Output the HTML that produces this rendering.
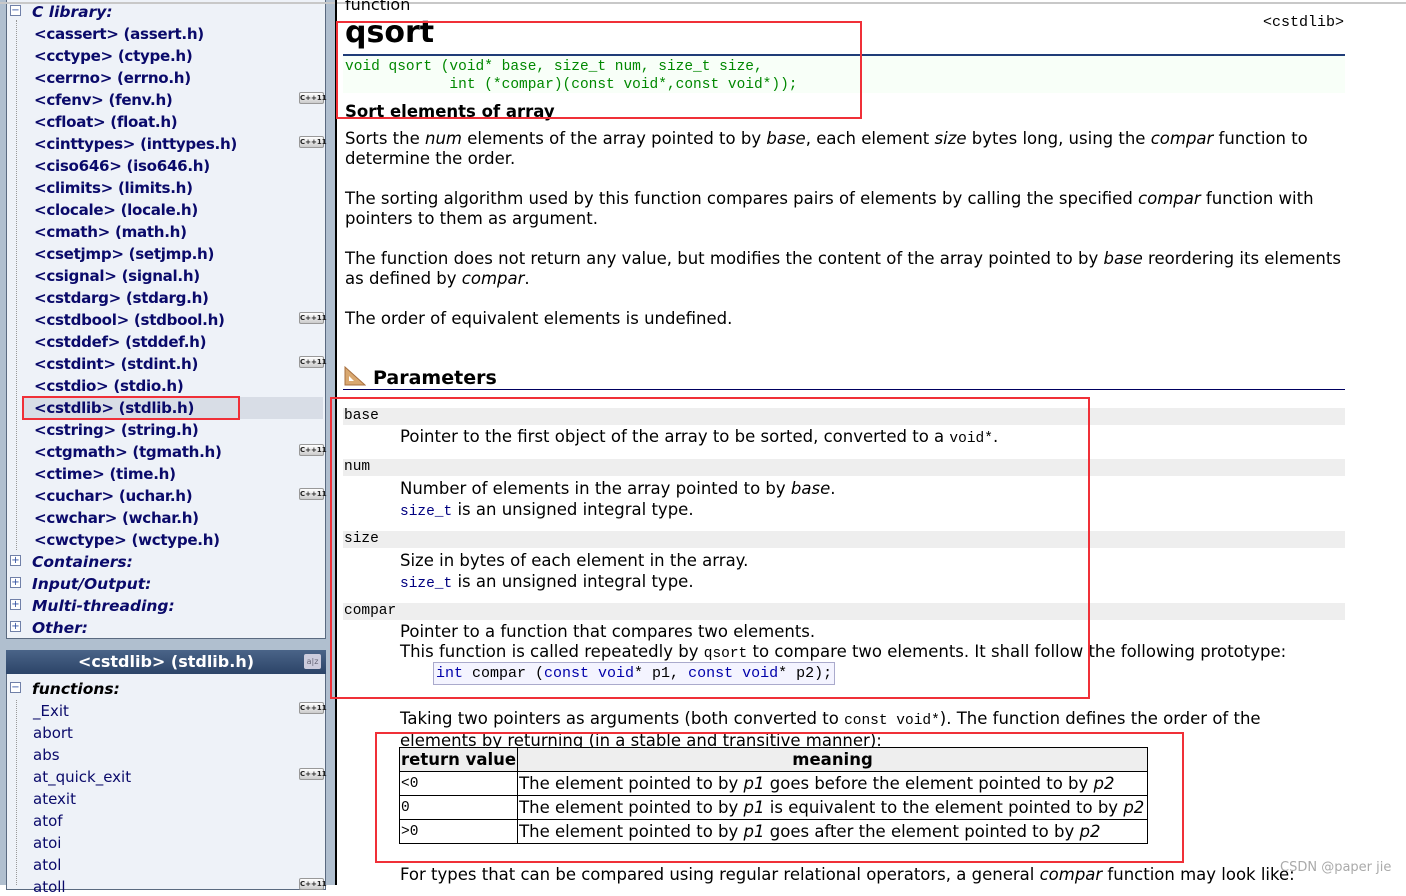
<!DOCTYPE html>
<html><head><meta charset="utf-8"><style>
*{margin:0;padding:0;box-sizing:border-box}
body{width:1406px;height:885px;overflow:hidden;background:#fff;font-family:"DejaVu Sans","Liberation Sans",sans-serif;position:relative}
.a{position:absolute;white-space:nowrap}
#side{position:absolute;left:0;top:0;width:335px;height:885px;background:#b0bfcf}
.pan{position:absolute;left:6px;width:320px;background:#eef2f8;border:1px solid #5a6a80}
.it{position:absolute;left:34px;font-size:15.1px;font-weight:bold;color:#0a0a6a;letter-spacing:-0.3px}
.fn{position:absolute;left:33px;font-size:15px;color:#0a0a6a}
.cat{position:absolute;left:32px;font-size:15.5px;font-weight:bold;font-style:italic;color:#0a0a6a}
.cpp{position:absolute;left:299px;width:25px;height:12px;border:1px solid #999;border-radius:2px;background:linear-gradient(#fff,#ccc);font-size:7px;font-weight:bold;line-height:10px;text-align:center;color:#222}
.box{position:absolute;left:10px;width:11px;height:11px;border:1px solid #7080a8;background:#fff;font-size:10px;line-height:9px;text-align:center;color:#3050a0}
.dot{position:absolute;left:16px;border-left:1px dotted #999}
.m{font-family:"Liberation Mono","DejaVu Sans Mono",monospace}
.t{font-size:16.5px;color:#000;left:345px}
.band{position:absolute;left:343px;width:1002px;height:17px;background:#eee}
.pn{font-size:14.5px;left:344px}
.d{left:400px;font-size:16.5px}
.red{position:absolute;border:2px solid #f03038}
table{border-collapse:collapse;font-size:16.5px}
td,th{border:1px solid #000;height:24px;padding:0 1px;text-align:left;font-weight:normal}
</style></head><body>
<div id="side">
<div class="pan" style="top:0;height:639px;border-top:none"></div>
<div class="dot" style="top:20px;height:530px"></div>
<div class="box" style="top:5px">−</div>
<div class="cat" style="top:3px">C library:</div>
<div style="position:absolute;left:23px;top:397px;width:300px;height:22px;background:#d8dde6"></div>
<div class="it" style="top:25px">&lt;cassert&gt; (assert.h)</div>
<div class="it" style="top:47px">&lt;cctype&gt; (ctype.h)</div>
<div class="it" style="top:69px">&lt;cerrno&gt; (errno.h)</div>
<div class="it" style="top:91px">&lt;cfenv&gt; (fenv.h)</div>
<div class="it" style="top:113px">&lt;cfloat&gt; (float.h)</div>
<div class="it" style="top:135px">&lt;cinttypes&gt; (inttypes.h)</div>
<div class="it" style="top:157px">&lt;ciso646&gt; (iso646.h)</div>
<div class="it" style="top:179px">&lt;climits&gt; (limits.h)</div>
<div class="it" style="top:201px">&lt;clocale&gt; (locale.h)</div>
<div class="it" style="top:223px">&lt;cmath&gt; (math.h)</div>
<div class="it" style="top:245px">&lt;csetjmp&gt; (setjmp.h)</div>
<div class="it" style="top:267px">&lt;csignal&gt; (signal.h)</div>
<div class="it" style="top:289px">&lt;cstdarg&gt; (stdarg.h)</div>
<div class="it" style="top:311px">&lt;cstdbool&gt; (stdbool.h)</div>
<div class="it" style="top:333px">&lt;cstddef&gt; (stddef.h)</div>
<div class="it" style="top:355px">&lt;cstdint&gt; (stdint.h)</div>
<div class="it" style="top:377px">&lt;cstdio&gt; (stdio.h)</div>
<div class="it" style="top:399px">&lt;cstdlib&gt; (stdlib.h)</div>
<div class="it" style="top:421px">&lt;cstring&gt; (string.h)</div>
<div class="it" style="top:443px">&lt;ctgmath&gt; (tgmath.h)</div>
<div class="it" style="top:465px">&lt;ctime&gt; (time.h)</div>
<div class="it" style="top:487px">&lt;cuchar&gt; (uchar.h)</div>
<div class="it" style="top:509px">&lt;cwchar&gt; (wchar.h)</div>
<div class="it" style="top:531px">&lt;cwctype&gt; (wctype.h)</div>
<div class="cpp" style="top:92px">C++11</div>
<div class="cpp" style="top:136px">C++11</div>
<div class="cpp" style="top:312px">C++11</div>
<div class="cpp" style="top:356px">C++11</div>
<div class="cpp" style="top:444px">C++11</div>
<div class="cpp" style="top:488px">C++11</div>
<div class="box" style="top:555px">+</div><div class="cat" style="top:553px">Containers:</div>
<div class="box" style="top:577px">+</div><div class="cat" style="top:575px">Input/Output:</div>
<div class="box" style="top:599px">+</div><div class="cat" style="top:597px">Multi-threading:</div>
<div class="box" style="top:621px">+</div><div class="cat" style="top:619px">Other:</div>
<div class="red" style="left:22px;top:396px;width:218px;height:24px"></div>

<div class="pan" style="top:650px;height:240px"></div>
<div style="position:absolute;left:6px;top:650px;width:320px;height:24px;background:linear-gradient(#4a6488,#2c4468);color:#fff;font-weight:bold;font-size:16px;text-align:center;line-height:24px">&lt;cstdlib&gt; (stdlib.h)</div>
<div style="position:absolute;left:304px;top:654px;width:17px;height:15px;background:#ccd;border-radius:2px;font-size:8px;color:#667;text-align:center;line-height:15px">a|z</div>
<div class="dot" style="top:700px;height:185px"></div>
<div class="box" style="top:682px">−</div>
<div class="cat" style="top:680px;color:#000">functions:</div>
<div class="fn" style="top:702px">_Exit</div>
<div class="fn" style="top:724px">abort</div>
<div class="fn" style="top:746px">abs</div>
<div class="fn" style="top:768px">at_quick_exit</div>
<div class="fn" style="top:790px">atexit</div>
<div class="fn" style="top:812px">atof</div>
<div class="fn" style="top:834px">atoi</div>
<div class="fn" style="top:856px">atol</div>
<div class="fn" style="top:878px">atoll</div>
<div class="cpp" style="top:702px">C++11</div>
<div class="cpp" style="top:768px">C++11</div>
<div class="cpp" style="top:878px">C++11</div>
</div>
<div style="position:absolute;left:0;top:2px;width:1406px;height:2px;background:#c8c8c8"></div>
<div style="position:absolute;left:335px;top:0;width:2px;height:885px;background:#000"></div>

<div class="a" style="left:345px;top:-5px;font-size:16px">function</div>
<div class="a" style="left:345px;top:15px;font-size:30px;font-weight:bold">qsort</div>
<div class="a m" style="left:1263px;top:14px;font-size:15px">&lt;cstdlib&gt;</div>
<div style="position:absolute;left:343px;top:54px;width:1002px;height:2px;background:#203c78"></div>
<div style="position:absolute;left:343px;top:56px;width:1002px;height:37px;background:#f8fff8"></div>
<div class="a m" style="left:345px;top:58px;font-size:14.5px;color:#080;line-height:18px;white-space:pre">void qsort (void* base, size_t num, size_t size,
            int (*compar)(const void*,const void*));</div>
<div class="a" style="left:345px;top:102px;font-size:16.5px;font-weight:bold">Sort elements of array</div>
<div class="red" style="left:336px;top:21px;width:526px;height:98px"></div>

<div class="a t" style="top:129px;line-height:20px">Sorts the <i>num</i> elements of the array pointed to by <i>base</i>, each element <i>size</i> bytes long, using the <i>compar</i> function to<br>determine the order.</div>
<div class="a t" style="top:189px;line-height:20px">The sorting algorithm used by this function compares pairs of elements by calling the specified <i>compar</i> function with<br>pointers to them as argument.</div>
<div class="a t" style="top:249px;line-height:20px">The function does not return any value, but modifies the content of the array pointed to by <i>base</i> reordering its elements<br>as defined by <i>compar</i>.</div>
<div class="a t" style="top:309px">The order of equivalent elements is undefined.</div>

<svg class="a" style="left:344px;top:366px" width="22" height="20"><path d="M1 19 L1 1 L21 19 Z" fill="#d9a870" stroke="#a87040"/><path d="M5 15 L5 10 L10 15 Z" fill="#fff"/></svg>
<div class="a" style="left:373px;top:367px;font-size:19px;font-weight:bold">Parameters</div>
<div style="position:absolute;left:343px;top:389px;width:1002px;height:1px;background:#000060"></div>

<div class="band" style="top:408px"></div><div class="a m pn" style="top:408px">base</div>
<div class="a d" style="top:427px">Pointer to the first object of the array to be sorted, converted to a <span class="m" style="font-size:14.5px">void*</span>.</div>
<div class="band" style="top:459px"></div><div class="a m pn" style="top:459px">num</div>
<div class="a d" style="top:478px;line-height:21px">Number of elements in the array pointed to by <i>base</i>.<br><span class="m" style="font-size:14.5px;color:#000080">size_t</span> is an unsigned integral type.</div>
<div class="band" style="top:531px"></div><div class="a m pn" style="top:531px">size</div>
<div class="a d" style="top:550px;line-height:21px">Size in bytes of each element in the array.<br><span class="m" style="font-size:14.5px;color:#000080">size_t</span> is an unsigned integral type.</div>
<div class="band" style="top:603px"></div><div class="a m pn" style="top:603px">compar</div>
<div class="a d" style="top:622px;line-height:20px">Pointer to a function that compares two elements.<br>This function is called repeatedly by <span class="m" style="font-size:14.5px">qsort</span> to compare two elements. It shall follow the following prototype:</div>
<div class="a m" style="left:433px;top:662px;height:23px;border:1px solid #aac;background:#f4f4ff;font-size:15px;padding:1px 2px;line-height:20px"><span style="color:#00a">int</span> compar (<span style="color:#00a">const void</span>* p1, <span style="color:#00a">const void</span>* p2);</div>
<div class="red" style="left:330px;top:397px;width:760px;height:302px"></div>

<div class="a d" style="top:709px;line-height:20px">Taking two pointers as arguments (both converted to <span class="m" style="font-size:14.5px">const void*</span>). The function defines the order of the<br>elements by returning (in a stable and transitive manner):</div>
<table class="a" style="left:399px;top:747px;width:749px">
<tr style="background:#eee"><th style="width:118px;font-weight:bold">return value</th><th style="text-align:center;font-weight:bold">meaning</th></tr>
<tr><td class="m" style="font-size:14.5px">&lt;0</td><td>The element pointed to by <i>p1</i> goes before the element pointed to by <i>p2</i></td></tr>
<tr><td class="m" style="font-size:14.5px">0</td><td>The element pointed to by <i>p1</i> is equivalent to the element pointed to by <i>p2</i></td></tr>
<tr><td class="m" style="font-size:14.5px">&gt;0</td><td>The element pointed to by <i>p1</i> goes after the element pointed to by <i>p2</i></td></tr>
</table>
<div class="red" style="left:375px;top:732px;width:809px;height:131px"></div>
<div class="a d" style="top:865px">For types that can be compared using regular relational operators, a general <i>compar</i> function may look like:</div>
<div class="a" style="left:1280px;top:860px;font-size:13px;color:#aaa">CSDN @paper jie</div>
</body></html>
